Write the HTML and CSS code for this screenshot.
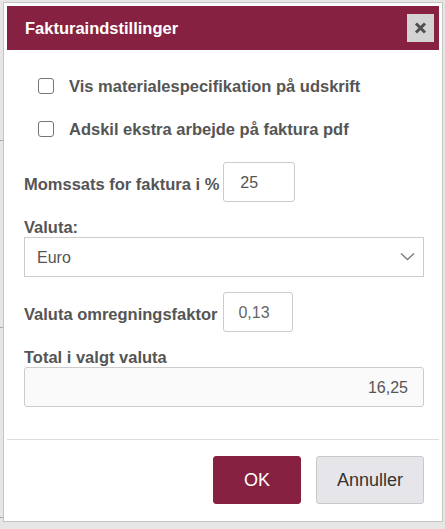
FILE: index.html
```html
<!DOCTYPE html>
<html lang="da">
<head>
<meta charset="utf-8">
<title>Fakturaindstillinger</title>
<link rel="stylesheet" href="styles.css">
</head>
<body>
<div class="dialog">
  <div class="titlebar">
    <span class="title">Fakturaindstillinger</span>
    <button class="close" type="button" aria-label="Luk">
      <svg width="13" height="12" viewBox="0 0 13 12"><path d="M2 1.5 L11 10.5 M11 1.5 L2 10.5" stroke="#505050" stroke-width="3" stroke-linecap="butt" fill="none"/></svg>
    </button>
  </div>
  <div class="content">
    <label class="check-row"><span class="check"></span><span class="check-text">Vis materialespecifikation på udskrift</span></label>
    <label class="check-row"><span class="check"></span><span class="check-text">Adskil ekstra arbejde på faktura pdf</span></label>

    <div class="inline-row row-moms">
      <span class="label">Momssats for faktura i %</span>
      <div class="field small">25</div>
    </div>

    <div class="label block">Valuta:</div>
    <div class="select">
      <span>Euro</span>
      <svg width="15" height="9" viewBox="0 0 15 9"><polyline points="1,1.5 7.5,7.5 14,1.5" fill="none" stroke="#808080" stroke-width="1.5"/></svg>
    </div>

    <div class="inline-row row-factor">
      <span class="label">Valuta omregningsfaktor</span>
      <div class="field small factor">0,13</div>
    </div>

    <div class="label block">Total i valgt valuta</div>
    <div class="field total">16,25</div>
  </div>
  <div class="buttonpane">
    <button class="btn ok" type="button">OK</button>
    <button class="btn cancel" type="button">Annuller</button>
  </div>
</div>
</body>
</html>
```
FILE: styles.css
```css
html, body {
  margin: 0;
  padding: 0;
}
body {
  width: 445px;
  height: 529px;
  overflow: hidden;
  font-family: "Liberation Sans", Arial, sans-serif;
  background:
    linear-gradient(#a8a8a8, #a8a8a8) 0 140px / 3px 1px no-repeat,
    linear-gradient(#a8a8a8, #a8a8a8) 0 327px / 3px 1px no-repeat,
    linear-gradient(#a8a8a8, #a8a8a8) 0 517px / 3px 1px no-repeat,
    #e6e6e6;
}
.dialog {
  box-sizing: border-box;
  width: 440px;
  margin: 2px 0 0 3px;
  padding: 3px;
  background: #fff;
  border: 1px solid #c5c5c5;
}
.titlebar {
  box-sizing: border-box;
  height: 44px;
  background: #862141;
  display: flex;
  align-items: center;
  justify-content: space-between;
  padding: 0 5px 0 18px;
}
.title {
  color: #fff;
  font-weight: bold;
  font-size: 16.5px;
}
.close {
  width: 27px;
  height: 28px;
  border: none;
  padding: 0;
  margin: 0;
  background: #d3d3d3;
  display: flex;
  align-items: center;
  justify-content: center;
}
.close svg {
  filter: blur(0.5px);
}
.content {
  padding: 15px 15px 32px 17px;
}
.check-row {
  display: flex;
  align-items: center;
  height: 42px;
  margin-bottom: 1px;
}
.check {
  box-sizing: border-box;
  width: 16px;
  height: 16px;
  margin-left: 14px;
  border: 1px solid #767676;
  border-radius: 3px;
  background: #fff;
}
.check-text {
  margin-left: 15px;
  font-weight: bold;
  font-size: 16.5px;
  color: #555;
}
.label {
  font-weight: bold;
  font-size: 16.5px;
  color: #555;
  line-height: 20px;
}
.label.block {
  margin-top: 15px;
}
.inline-row {
  display: flex;
  align-items: center;
  margin-top: 12px;
}
.inline-row .label {
  padding-top: 4px;
  margin-right: 4px;
}
.row-factor {
  margin-top: 15px;
}
.row-factor .label {
  margin-right: 6px;
}
.field {
  box-sizing: border-box;
  height: 40px;
  border: 1px solid #cccccc;
  border-radius: 3px;
  font-size: 16px;
  color: #555;
  display: flex;
  align-items: center;
  padding: 2px 15px 0 16px;
  background: #fff;
}
.field.small {
  width: 72px;
}
.field.factor {
  width: 70px;
  padding-left: 14px;
  color: #666;
}
.field.total {
  width: 400px;
  justify-content: flex-end;
  background: #fafafa;
}
.select {
  box-sizing: border-box;
  width: 400px;
  height: 40px;
  border: 1px solid #cccccc;
  display: flex;
  align-items: center;
  justify-content: space-between;
  padding: 1px 8px 0 12px;
  font-size: 16px;
  color: #555;
}
.select svg {
  margin-top: -2px;
}
.buttonpane {
  border-top: 1px solid #dddddd;
  display: flex;
  justify-content: flex-end;
  gap: 15px;
  padding: 16px 15px 14px 0;
}
.btn {
  box-sizing: border-box;
  height: 48px;
  border-radius: 3px;
  font-family: "Liberation Sans", Arial, sans-serif;
  font-size: 18px;
  padding: 0;
  margin: 0;
}
.btn.ok {
  width: 88px;
  background: #862141;
  border: 1px solid #862141;
  color: #fff;
}
.btn.cancel {
  width: 108px;
  background: #e6e6ea;
  border: 1px solid #c8c8c8;
  color: #333;
}
```
